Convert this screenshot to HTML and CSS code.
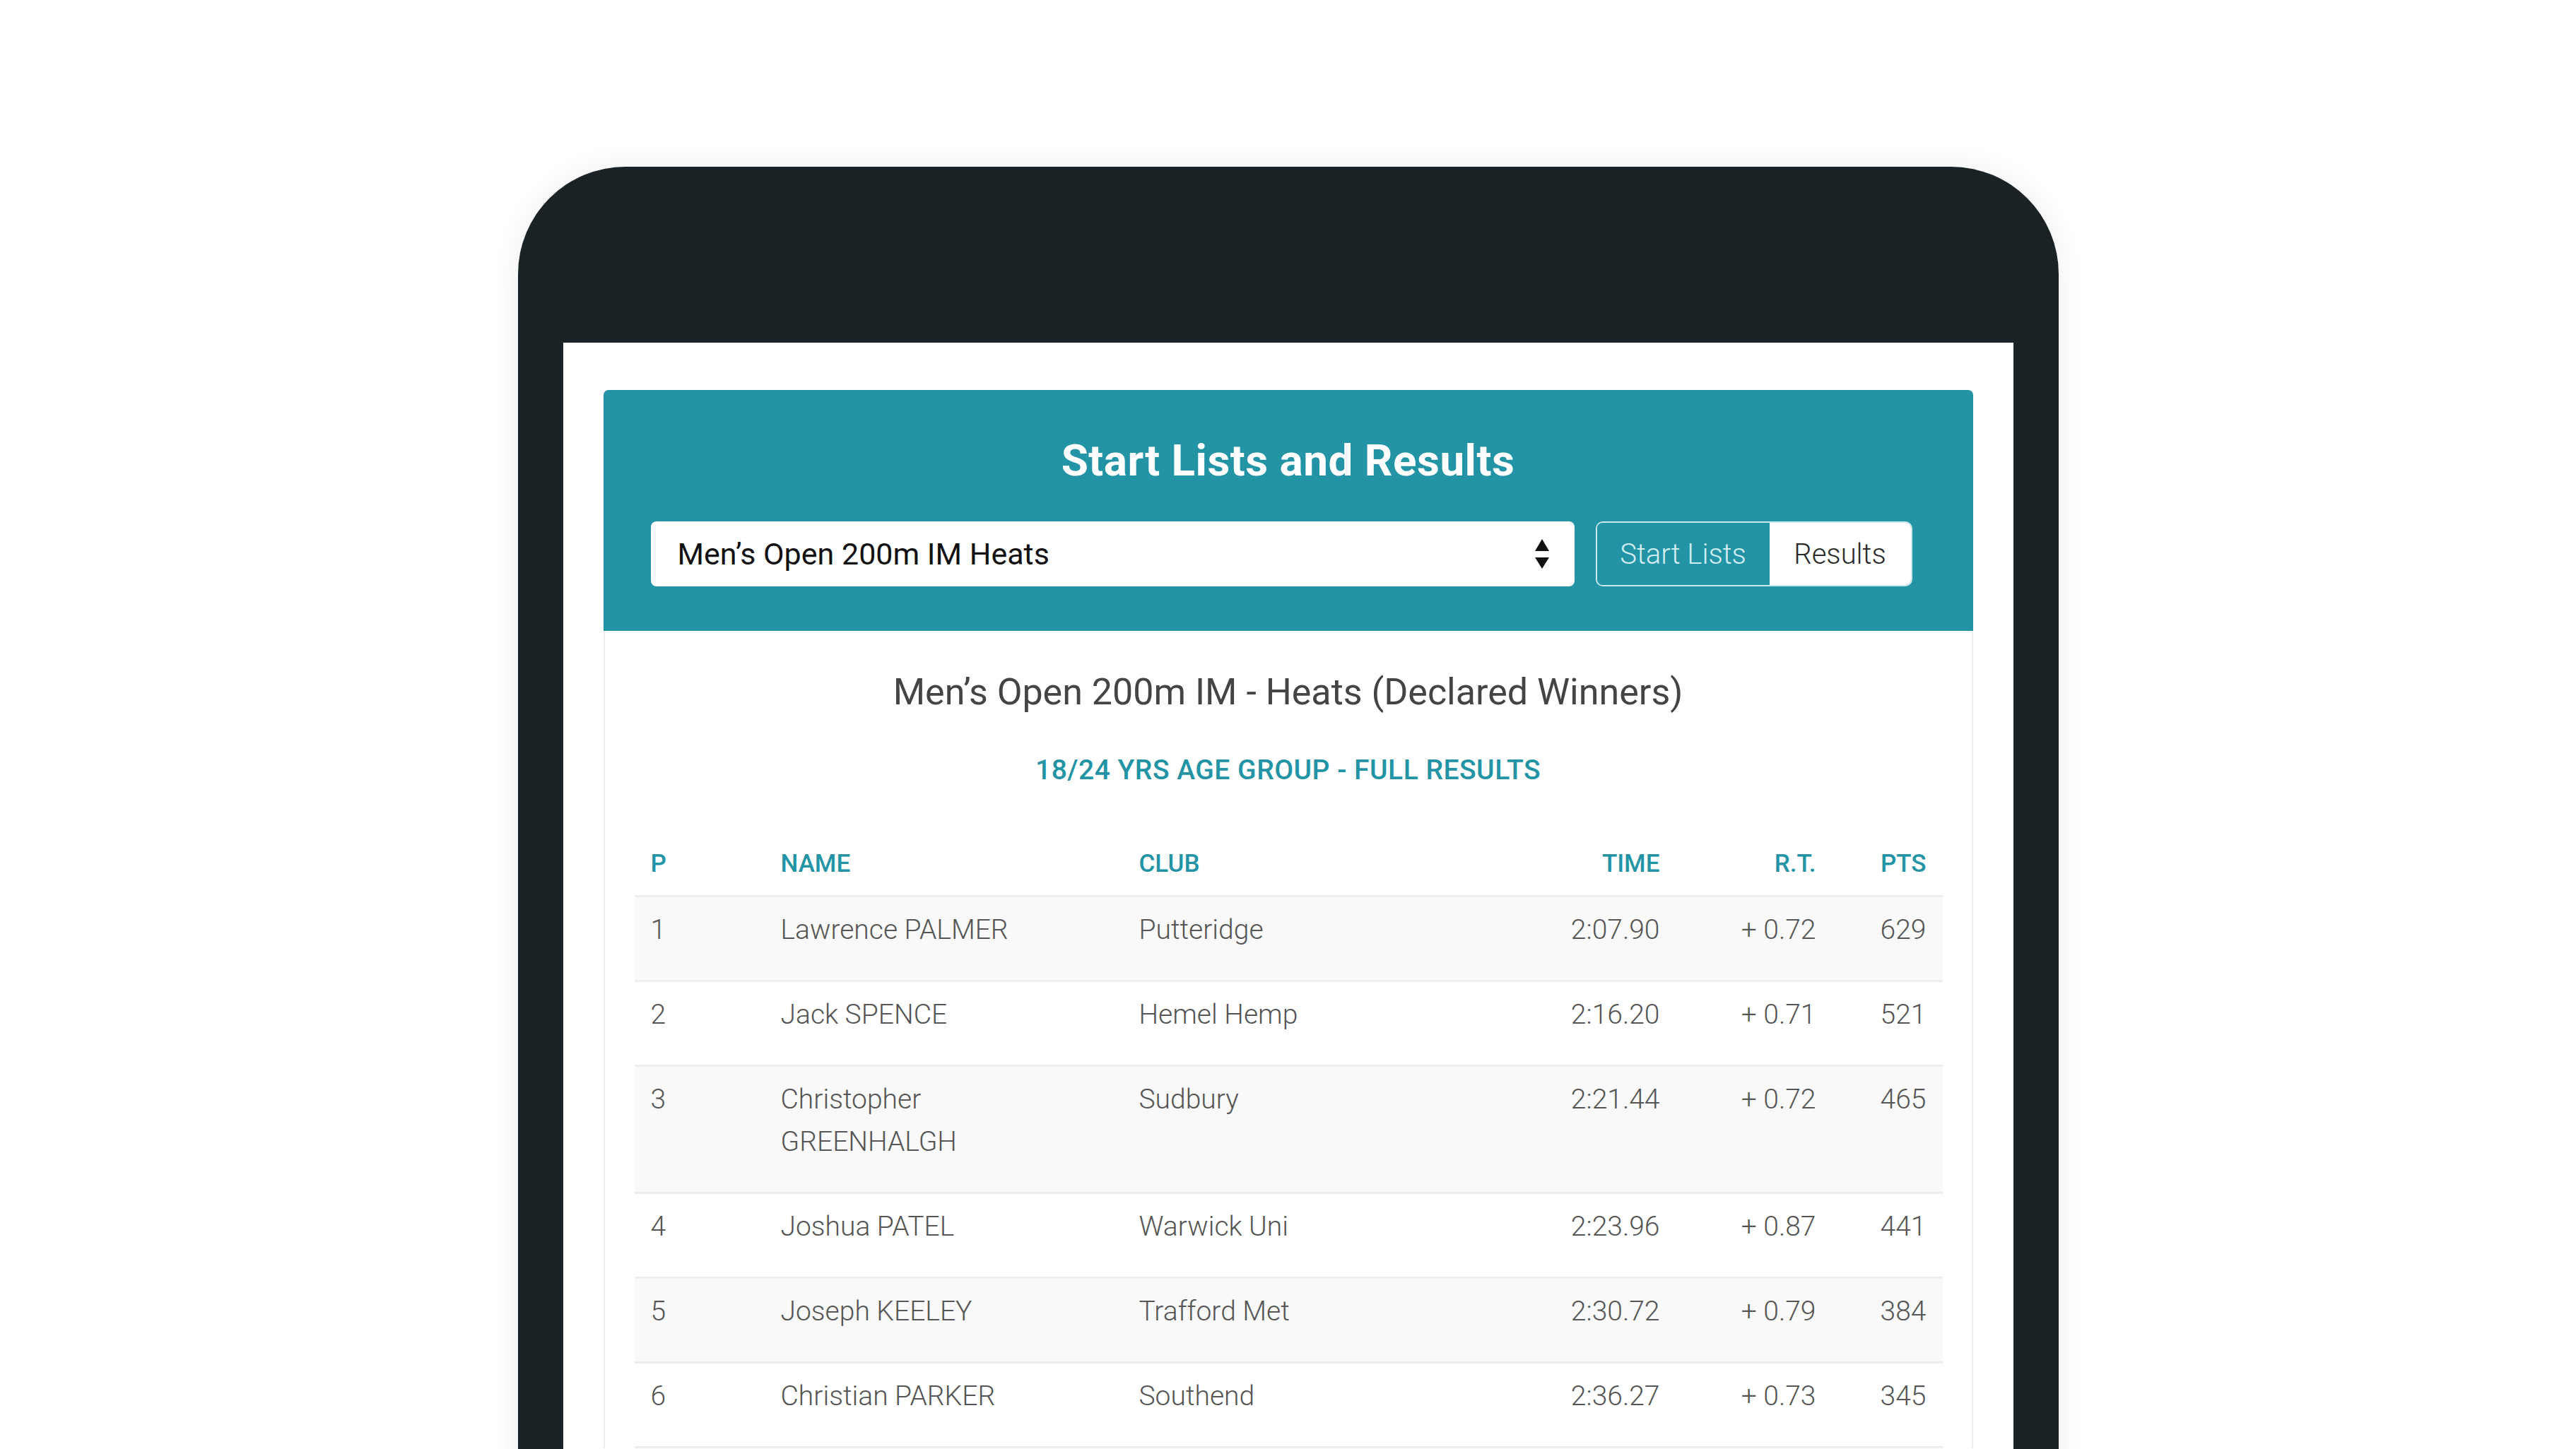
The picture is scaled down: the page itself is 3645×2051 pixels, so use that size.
FILE: index.html
```html
<!DOCTYPE html>
<html lang="en">
<head>
<meta charset="utf-8">
<title>Start Lists and Results</title>
<link rel="stylesheet" href="styles.css">
</head>
<body>
<div class="device">
  <div class="screen">
    <div class="card">
      <header class="card-head">
        <h1 class="title">Start Lists and Results</h1>
        <div class="controls">
          <div class="select">
            <span class="select-text">Men’s Open 200m IM Heats</span>
            <svg class="select-arrows" width="20" height="42" viewBox="0 0 20 42" aria-hidden="true">
              <polygon points="10,0 20,17 0,17" fill="#111"/>
              <polygon points="0,26 20,26 10,42" fill="#111"/>
            </svg>
          </div>
          <div class="toggle">
            <span class="toggle-btn toggle-start is-active">Start Lists</span>
            <span class="toggle-btn toggle-results">Results</span>
          </div>
        </div>
      </header>
      <section class="card-body">
        <h2 class="event">Men’s Open 200m IM - Heats (Declared Winners)</h2>
        <p class="group">18/24 YRS AGE GROUP - FULL RESULTS</p>
        <table class="results">
          <colgroup>
            <col class="c-pos"><col class="c-name"><col class="c-club"><col class="c-time"><col class="c-rt"><col class="c-pts">
          </colgroup>
          <thead>
            <tr>
              <th>P</th><th>NAME</th><th>CLUB</th><th class="num">TIME</th><th class="num">R.T.</th><th class="num">PTS</th>
            </tr>
          </thead>
          <tbody>
            <tr><td>1</td><td class="name">Lawrence PALMER</td><td>Putteridge</td><td class="num">2:07.90</td><td class="num">+ 0.72</td><td class="num">629</td></tr>
            <tr><td>2</td><td class="name">Jack SPENCE</td><td>Hemel Hemp</td><td class="num">2:16.20</td><td class="num">+ 0.71</td><td class="num">521</td></tr>
            <tr><td>3</td><td class="name">Christopher GREENHALGH</td><td>Sudbury</td><td class="num">2:21.44</td><td class="num">+ 0.72</td><td class="num">465</td></tr>
            <tr><td>4</td><td class="name">Joshua PATEL</td><td>Warwick Uni</td><td class="num">2:23.96</td><td class="num">+ 0.87</td><td class="num">441</td></tr>
            <tr><td>5</td><td class="name">Joseph KEELEY</td><td>Trafford Met</td><td class="num">2:30.72</td><td class="num">+ 0.79</td><td class="num">384</td></tr>
            <tr><td>6</td><td class="name">Christian PARKER</td><td>Southend</td><td class="num">2:36.27</td><td class="num">+ 0.73</td><td class="num">345</td></tr>
          </tbody>
        </table>
      </section>
    </div>
  </div>
</div>
</body>
</html>
```
FILE: styles.css
```css
html, body {
  margin: 0;
  padding: 0;
}
body {
  width: 3645px;
  height: 2051px;
  overflow: hidden;
  background: #ffffff;
  font-family: Roboto, "Liberation Sans", sans-serif;
}
.device {
  width: 2180px;
  margin: 236px auto 0;
  box-sizing: border-box;
  padding: 249px 64px 0;
  height: 2400px;
  background: #1b2226;
  border-radius: 152px 152px 0 0;
  box-shadow: 0 0 40px rgba(0, 0, 0, 0.07);
}
.screen {
  background: #ffffff;
  height: 2000px;
  padding: 67px 57px 0;
}
.card {
  display: flex;
  flex-direction: column;
}
.card-head {
  background: #2394a5;
  border-radius: 7px 7px 0 0;
  padding: 69px 86px 63px 67px;
}
.title {
  margin: 0 0 55px 19px;
  text-align: center;
  color: #ffffff;
  font-family: Roboto, "DejaVu Sans", sans-serif;
  font-weight: 700;
  font-size: 62px;
  line-height: 62px;
  letter-spacing: 0.5px;
}
.controls {
  display: flex;
  gap: 30px;
  height: 92px;
}
.select {
  flex: 1;
  display: flex;
  align-items: center;
  justify-content: space-between;
  background: #ffffff;
  border-radius: 8px;
  padding: 0 36px 0 38px;
}
.select-text {
  font-size: 43px;
  font-weight: 400;
  color: #111111;
}
.select-arrows {
  display: block;
}
.toggle {
  display: flex;
  border: 2px solid #cfe8eb;
  border-radius: 10px;
  overflow: hidden;
}
.toggle-btn {
  display: flex;
  align-items: center;
  justify-content: center;
  font-size: 40px;
  font-weight: 300;
}
.toggle-start {
  width: 244px;
  background: #2394a5;
  color: #d6eef1;
}
.toggle-results {
  width: 200px;
  background: #ffffff;
  color: #2a2a2a;
}
.card-body {
  border-left: 2px solid #ededed;
  border-right: 2px solid #ededed;
  padding: 57px 42px 0;
}
.event {
  margin: 0;
  text-align: center;
  color: #444444;
  font-weight: 400;
  font-size: 52px;
  line-height: 60px;
}
.group {
  margin: 55px 0 0;
  text-align: center;
  color: #2394a5;
  font-weight: 500;
  font-size: 39px;
  line-height: 50px;
  letter-spacing: 0.5px;
}
.results {
  margin-top: 83px;
  width: 100%;
  border-collapse: collapse;
  table-layout: fixed;
}
.c-pos { width: 184px; }
.c-name { width: 507px; }
.c-club { width: 480px; }
.c-time { width: 303px; }
.c-rt { width: 221px; }
.c-pts { width: 156px; }
.results th {
  text-align: left;
  color: #2394a5;
  font-weight: 500;
  font-size: 35px;
  line-height: 50px;
  padding: 0 23px 19px;
  border-bottom: 3px solid #ececec;
}
.results td {
  vertical-align: top;
  color: #555555;
  font-weight: 300;
  font-size: 39px;
  line-height: 60px;
  padding: 16px 23px 41px;
  border-bottom: 3px solid #ededed;
}
.results td.name {
  padding-right: 60px;
}
.results tbody tr:nth-child(odd) td {
  background: #f9f9f9;
}
.results .num {
  text-align: right;
}
```
